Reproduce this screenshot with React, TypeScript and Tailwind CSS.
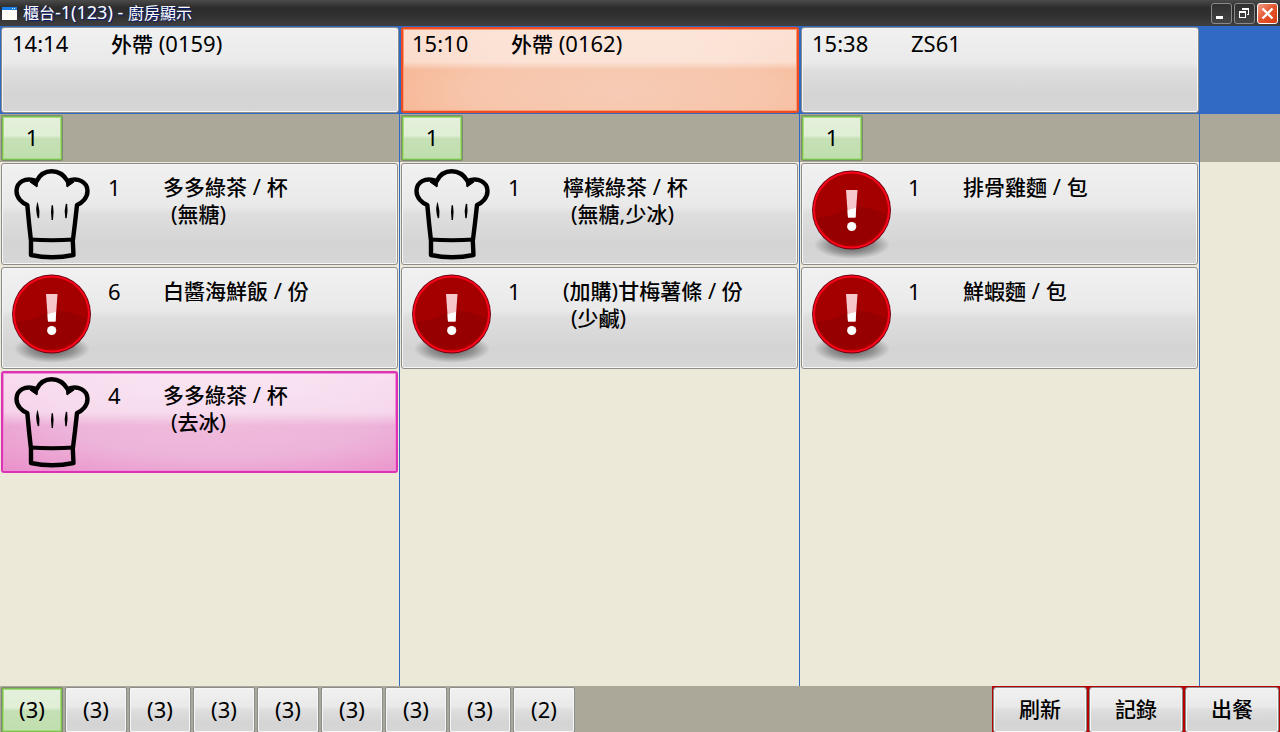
import React from "react";

type IconKind = "chef" | "alert";
type Tone = "plain" | "orange" | "pink";

interface Dish {
  icon: IconKind;
  qty: number;
  name: string;
  note?: string;
  tone?: Tone;
}

interface Order {
  time: string;
  title: string;
  tone?: Tone;
  pages: number;
  dishes: Dish[];
}

const orders: Order[] = [
  {
    time: "14:14",
    title: "外帶 (0159)",
    pages: 1,
    dishes: [
      { icon: "chef", qty: 1, name: "多多綠茶 / 杯", note: "(無糖)" },
      { icon: "alert", qty: 6, name: "白醬海鮮飯 / 份" },
      { icon: "chef", qty: 4, name: "多多綠茶 / 杯", note: "(去冰)", tone: "pink" },
    ],
  },
  {
    time: "15:10",
    title: "外帶 (0162)",
    tone: "orange",
    pages: 1,
    dishes: [
      { icon: "chef", qty: 1, name: "檸檬綠茶 / 杯", note: "(無糖,少冰)" },
      { icon: "alert", qty: 1, name: "(加購)甘梅薯條 / 份", note: "(少鹹)" },
    ],
  },
  {
    time: "15:38",
    title: "ZS61",
    pages: 1,
    dishes: [
      { icon: "alert", qty: 1, name: "排骨雞麵 / 包" },
      { icon: "alert", qty: 1, name: "鮮蝦麵 / 包" },
    ],
  },
];

const tabs = [3, 3, 3, 3, 3, 3, 3, 3, 2];

const plain =
  "border border-[#8c8c8c] shadow-[inset_0_0_0_1px_#f6f6f6] bg-[linear-gradient(180deg,#f1f1f1_0%,#e9e9e9_42%,#dedede_50%,#d4d4d4_80%,#d6d6d6_100%)]";
const orange =
  "border-2 border-[#ee4c20] shadow-[inset_0_0_0_1px_#fb9a74] bg-[linear-gradient(180deg,#ffffffa0_0%,#ffffff80_40%,#ffffff00_50%),radial-gradient(ellipse_at_55%_75%,#f6cbb5_0%,#f7c5aa_50%,#f7ac86_100%)]";
const pink =
  "border-2 border-[#dc32b4] shadow-[inset_0_0_0_1px_#f08fd6] bg-[linear-gradient(180deg,#ffffffb0_0%,#ffffff80_40%,#ffffff00_54%),radial-gradient(ellipse_at_55%_50%,#efbbdc_0%,#edb4da_50%,#ea90ca_100%)]";
const green =
  "border-2 border-[#7cbf50] outline outline-[#7d8a72] -outline-offset-1 shadow-[inset_0_0_0_1px_#a5dc80] bg-[linear-gradient(180deg,#e4f0dc_0%,#e0efd6_44%,#c6e0b6_52%,#bfdfae_100%)]";

const tones: Record<Tone, string> = { plain, orange, pink };

const sizes = {
  body: { wrap: "text-[22px]", han: "text-[21px] font-medium" },
  title: { wrap: "text-[18px]", han: "text-[16px]" },
};

/** Sets Han runs slightly smaller than the Latin text around them. */
function Mixed({ text, size = "body" }: { text: string; size?: keyof typeof sizes }) {
  const runs = text.split(/([\u4e00-\u9fff]+)/).filter(Boolean);
  return (
    <span className={sizes[size].wrap}>
      {runs.map((run, i) =>
        /[\u4e00-\u9fff]/.test(run) ? (
          <span key={i} className={sizes[size].han}>
            {run}
          </span>
        ) : (
          run
        ),
      )}
    </span>
  );
}

function ChefHat() {
  return (
    <svg viewBox="0 0 80 96" className="h-24 w-20" fill="none" stroke="#000" aria-hidden="true">
      <path
        d="M19 89 V75 Q17 58 15.300 39 C10 37 4.500 32 4.500 25 C4.500 16 13 11 24.700 15 C31 2 48 2 55.500 15 C66 11 75.500 16 75.500 25 C75.500 32 70 37 65 39 Q63 58 60.800 75 L61.500 89 Q40 93.500 19 89 Z"
        strokeWidth="4.400"
        strokeLinejoin="round"
      />
      <path d="M18 73.500 Q40 75 62 73.500" strokeWidth="3.800" />
      <path d="M18 16 L26 14 L25 21 Z M62 16 L54 14 L55 21 Z" fill="#000" strokeWidth="1" />
      <path
        d="M25.500 38.500 Q27.500 45 26.500 52 Q24 45 25.500 38.500 Z M40.300 39.500 Q41.500 46 40.300 54 Q39 46 40.300 39.500 Z M54.500 38 Q55.500 45 54 52 Q52.500 45 54.500 38 Z"
        fill="#000"
        strokeWidth="1.400"
      />
    </svg>
  );
}

function AlertBadge() {
  const id = React.useId();
  return (
    <svg viewBox="0 0 80 96" className="h-24 w-20" aria-hidden="true">
      <defs>
        <radialGradient id={id}>
          <stop offset="0" stopColor="#000" stopOpacity="0.6" />
          <stop offset="0.6" stopColor="#000" stopOpacity="0.3" />
          <stop offset="1" stopColor="#000" stopOpacity="0" />
        </radialGradient>
      </defs>
      <ellipse cx="40" cy="79" rx="38" ry="14" fill={`url(#${id})`} />
      <circle cx="39.500" cy="44" r="39.500" fill="#6e0010" />
      <circle cx="39.500" cy="44" r="37.500" fill="#a40000" stroke="#f8061a" strokeWidth="2" />
      <path d="M4 52 C20 53 30 41 46 41 C60 41 66 47 75 48 A36.500 36.500 0 0 1 4 52 Z" fill="#960000" />
      <path d="M34 24 H45.500 L43.500 51.500 H36 Z" fill="#f6c8cc" />
      <path d="M35.500 44.500 Q39 42.500 44 42 L43.500 51.500 H36 Z" fill="#fff" />
      <circle cx="39.700" cy="60.500" r="4.600" fill="#fff" />
    </svg>
  );
}

function OrderColumn({ order }: { order: Order }) {
  return (
    <section className="flex w-[400px] shrink-0 flex-col border-r border-[#316ac5]">
      <div className="h-[88px] bg-[#316ac5] py-px pl-px">
        <button
          type="button"
          className={`flex h-full w-full items-start rounded-[3px] text-left leading-7 ${order.tone ? "px-[9px]" : "px-2.5 pt-px"} ${tones[order.tone ?? "plain"]}`}
        >
          <span className="w-[99px]">
            <Mixed text={order.time} />
          </span>
          <Mixed text={order.title} />
        </button>
      </div>
      <div className="h-12 bg-[#aca899] px-px pt-px">
        <button type="button" className={`h-[46px] w-[62px] rounded-[2px] pb-0.5 ${green}`}>
          <Mixed text={String(order.pages)} />
        </button>
      </div>
      <ul className="flex flex-col gap-0.5 px-px pt-px">
        {order.dishes.map((dish, i) => (
          <li key={i}>
            <button
              type="button"
              className={`flex h-[102px] w-full items-start rounded-[3px] text-left ${dish.tone ? "px-[9px] pt-px" : "px-2.5 pt-0.5"} ${tones[dish.tone ?? "plain"]}`}
            >
              {dish.icon === "chef" ? <ChefHat /> : <AlertBadge />}
              <span className="w-[71px] pt-2 pl-4 leading-[26px]">
                <Mixed text={String(dish.qty)} />
              </span>
              <span className="flex flex-col pt-[7px] leading-[26px]">
                <Mixed text={dish.name} />
                {dish.note && (
                  <span className="pl-2">
                    <Mixed text={dish.note} />
                  </span>
                )}
              </span>
            </button>
          </li>
        ))}
      </ul>
    </section>
  );
}

function TitleBar() {
  return (
    <header className="flex h-[26px] items-center bg-[linear-gradient(180deg,#4a4a4a_0%,#2c2c2c_30%,#303030_60%,#404040_100%)] pr-0.5 pl-0.5 text-white">
      <svg viewBox="0 0 15 13" className="mr-1.5 h-[13px] w-[15px]" aria-hidden="true">
        <path d="M0 0 H15 V13 H0 Z" fill="#fffff8" />
        <path d="M0 0 H15 V3 H0 Z" fill="#1a7fe8" />
        <path d="M10 1 H11 V2 H10 Z M12 1 H13 V2 H12 Z" fill="#fff" />
      </svg>
      <h1 className="pb-0.5 leading-6 [text-shadow:1px_1px_1px_#001a80]">
        <Mixed text="櫃台-1(123) - 廚房顯示" size="title" />
      </h1>
      <div className="ml-auto flex gap-0.5">
        <button type="button" aria-label="最小化" className="size-[21px] rounded-[3px] border border-[#8a8a8a] bg-linear-to-b from-[#303030] to-[#444444]">
          <svg viewBox="0 0 19 19" className="size-[19px]">
            <path d="M4 12 H11 V15 H4 Z" fill="#fff" />
          </svg>
        </button>
        <button type="button" aria-label="還原" className="size-[21px] rounded-[3px] border border-[#8a8a8a] bg-linear-to-b from-[#303030] to-[#444444]">
          <svg viewBox="0 0 19 19" className="size-[19px]" fill="#fff" fillRule="evenodd">
            <path d="M4 7 H11 V14 H4 Z M5 9 H10 V13 H5 Z" />
            <path d="M7 4 H14 V11 H12 V10 H13 V6 H7 Z" />
          </svg>
        </button>
        <button type="button" aria-label="關閉" className="size-[21px] rounded-[3px] border border-white bg-linear-to-br from-[#f09a80] via-[#e4532c] to-[#d83c10]">
          <svg viewBox="0 0 19 19" className="size-[19px]" stroke="#fff" strokeWidth="2.400">
            <path d="M4.500 4.500 L14.500 14.500 M14.500 4.500 L4.500 14.500" />
          </svg>
        </button>
      </div>
    </header>
  );
}

export default function App() {
  return (
    <div className="flex h-screen flex-col overflow-hidden bg-[#ece9d8] font-['Noto_Sans','Noto_Sans_CJK_TC',sans-serif] text-black">
      <TitleBar />
      <main className="flex min-h-0 flex-1">
        {orders.map((order) => (
          <OrderColumn key={order.time} order={order} />
        ))}
        <div className="min-w-0 flex-1">
          <div className="h-[88px] bg-[#316ac5]" />
          <div className="h-12 bg-[#aca899]" />
        </div>
      </main>
      <footer className="flex h-[46px] shrink-0 items-start justify-between overflow-hidden bg-[#aca899]">
        <nav className="flex gap-0.5 pt-px pl-px">
          {tabs.map((count, i) => (
            <button
              key={i}
              type="button"
              className={`h-[46px] w-[62px] rounded-[2px] pb-0.5 ${i === 0 ? green : plain}`}
            >
              <Mixed text={`(${count})`} />
            </button>
          ))}
        </nav>
        <div className="flex">
          {["刷新", "記錄", "出餐"].map((label) => (
            <div key={label} className="w-24 bg-[#b80000] px-px pt-px">
              <button type="button" className={`h-[46px] w-full rounded-[3px] pb-0.5 ${plain}`}>
                <Mixed text={label} />
              </button>
            </div>
          ))}
        </div>
      </footer>
    </div>
  );
}
